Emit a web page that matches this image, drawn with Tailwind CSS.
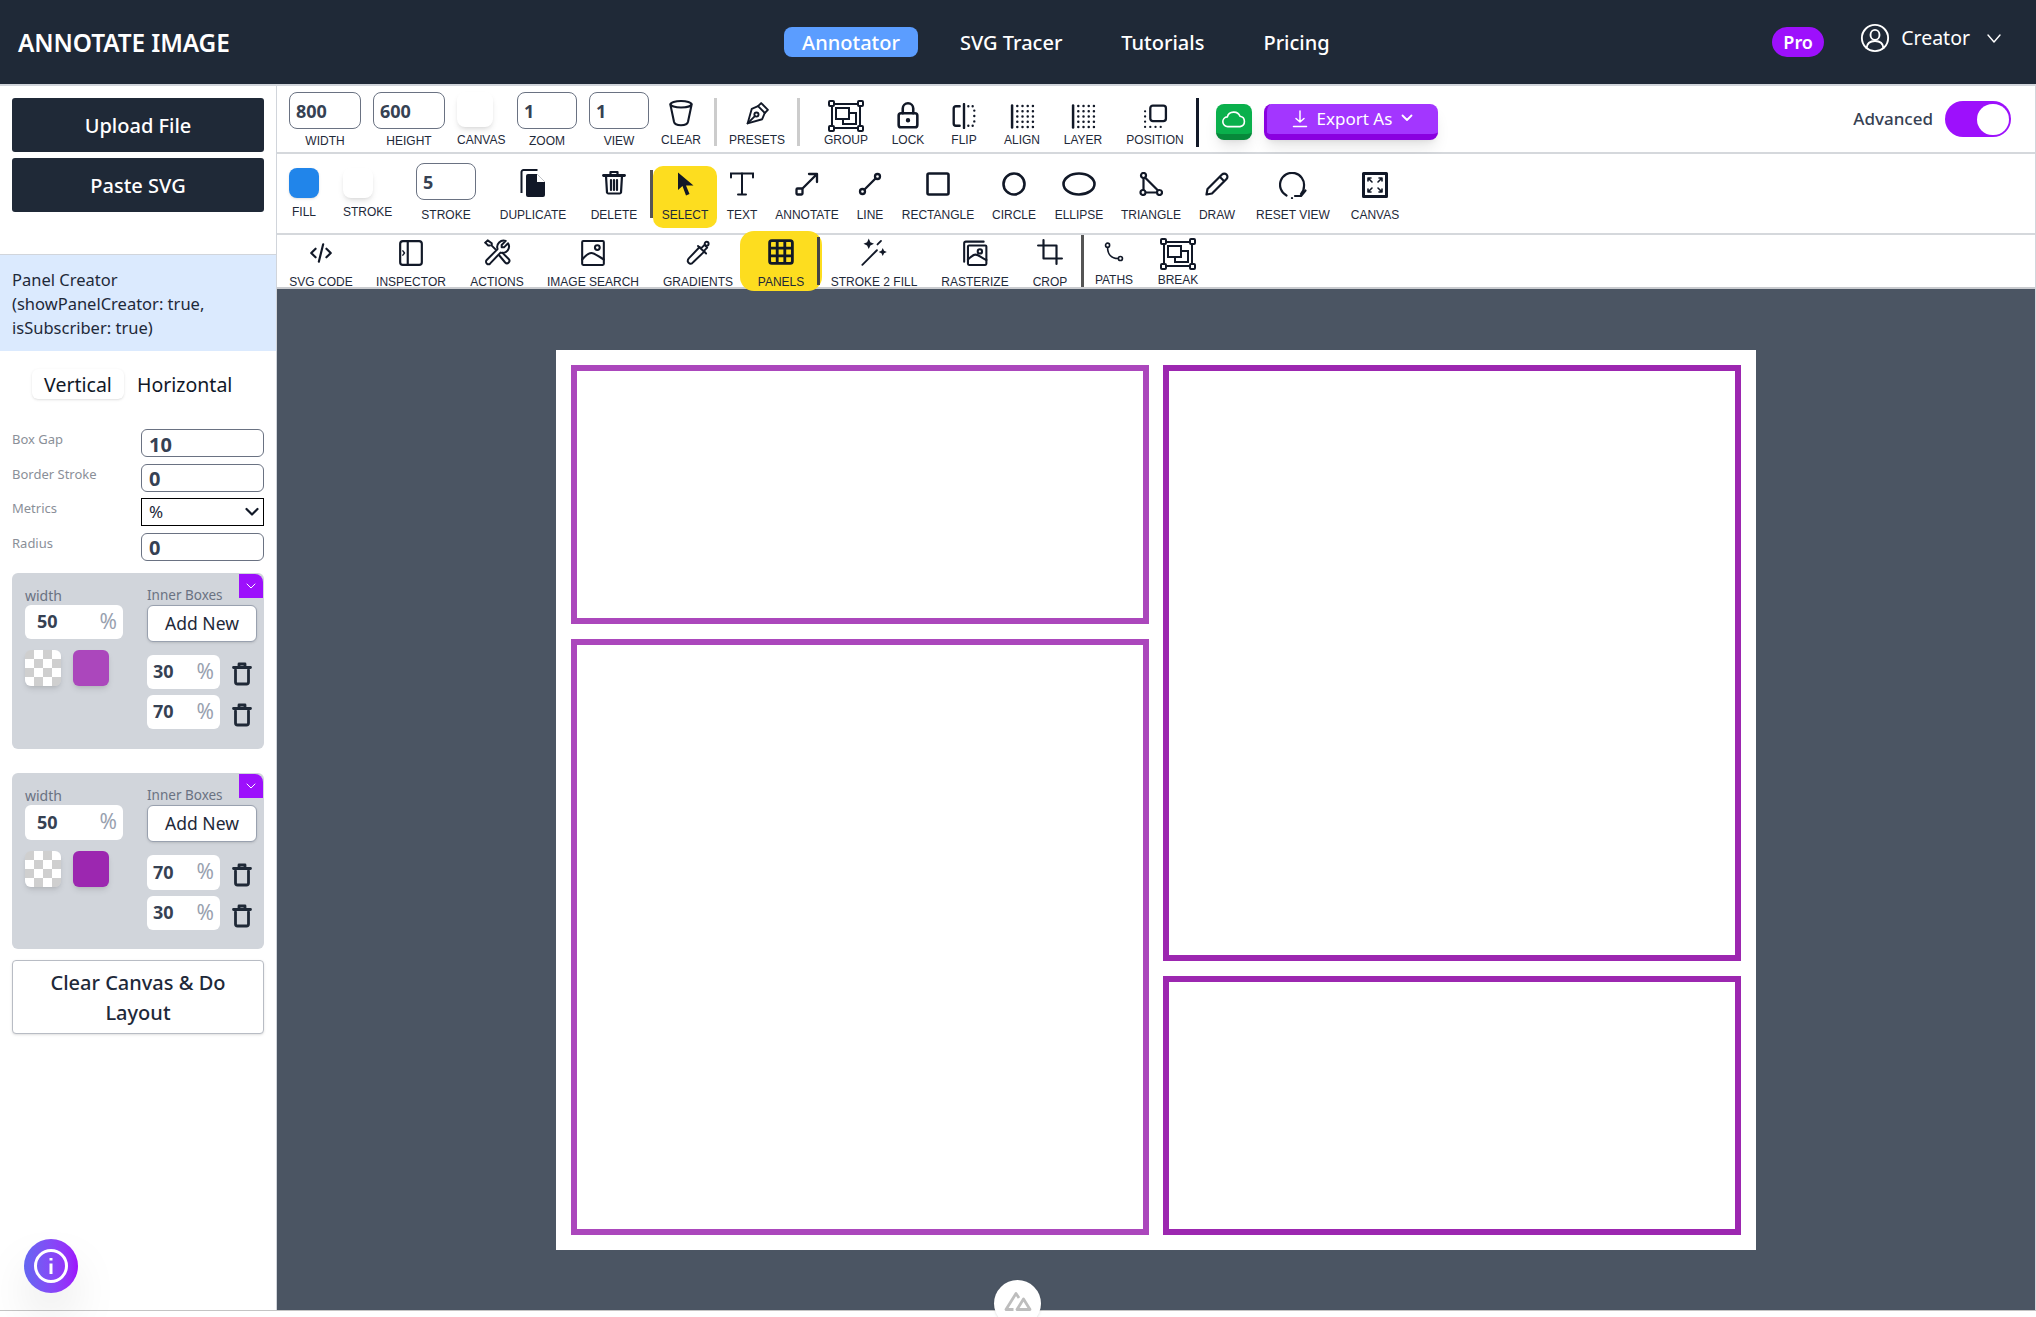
<!DOCTYPE html>
<html lang="en">
<head>
  <meta charset="UTF-8">
  <meta name="viewport" content="width=device-width, initial-scale=1.0">
  <title>Annotate Image</title>
  <script src="https://cdn.jsdelivr.net/npm/@tailwindcss/browser@4"></script>
</head>
<body class="bg-white font-['Noto_Sans',sans-serif] text-gray-800 overflow-hidden">
<div class="relative w-[2036px] h-[1317px] flex flex-col overflow-hidden">

  <!-- Header -->
  <header class="h-[86px] shrink-0 bg-[#1f2937] border-b-2 border-[#d1d5db] flex items-center pl-[18px] pr-[34px] text-white">
    <div class="pt-[2px] text-[24.4px] font-semibold tracking-[-0.1px] whitespace-nowrap w-[230px]">ANNOTATE IMAGE</div>
    <nav class="ml-[536px] flex items-center gap-[23px] text-[20px] font-medium">
      <a class="mr-[1px] h-[30px] w-[134px] pt-[1px] flex items-center justify-center rounded-lg bg-[#5b9dff]">Annotator</a>
      <a class="px-[18px] pt-[1px]">SVG Tracer</a>
      <a class="px-[18px] pt-[1px]">Tutorials</a>
      <a class="px-[18px] pt-[1px]">Pricing</a>
    </nav>
    <div class="ml-auto flex items-center">
      <span class="w-[52px] h-[30px] rounded-full bg-[#9d10fc] flex items-center justify-center text-[18px] font-semibold">Pro</span>
      <div class="ml-[36px] -mt-[8px] flex items-center">
        <svg class="w-[30px] h-[30px]" viewBox="0 0 24 24" fill="none" stroke="currentColor" stroke-width="1.5" stroke-linecap="round"><circle cx="12" cy="12" r="10.5"/><ellipse cx="12" cy="9.5" rx="3.6" ry="4"/><path d="M5.2 20c.4-3.6 3.2-5.6 6.8-5.6s6.4 2 6.8 5.6"/></svg>
        <span class="ml-[11px] text-[19.5px]">Creator</span>
        <svg class="ml-[16px] w-[16px] h-[16px]" viewBox="0 0 16 16" fill="none" stroke="currentColor" stroke-width="1.4" stroke-linecap="round" stroke-linejoin="round"><path d="M2 5l6 7 6-7"/></svg>
      </div>
    </div>
  </header>

  <div class="flex h-[1224px] shrink-0">

    <!-- Sidebar -->
    <aside class="w-[277px] shrink-0 border-r border-[#d1d5db] bg-white relative flex flex-col">
      <div class="px-[12px] pt-[12px] flex flex-col gap-[6px]">
        <button class="h-[54px] pt-[2px] rounded-[3px] bg-[#1f2937] text-white text-[20px] font-medium">Upload File</button>
        <button class="h-[54px] pt-[2px] rounded-[3px] bg-[#1f2937] text-white text-[20px] font-medium">Paste SVG</button>
      </div>

      <div class="mt-[42px] h-[97px] border-t border-[#d1d5db] bg-[#dbeafe] pl-[12px] pt-[13px] text-[16.5px] leading-[24px] text-gray-800">
        Panel Creator<br>(showPanelCreator: true,<br>isSubscriber: true)
      </div>

      <div class="mt-[18px] h-[30px] pl-[32px] flex items-center text-[19.5px] leading-[26px] text-gray-900">
        <span class="w-[92px] h-[30px] pt-[2px] rounded-md bg-white shadow flex items-center justify-center">Vertical</span>
        <span class="ml-[13px] pt-[2px]">Horizontal</span>
      </div>

      <div class="mt-[30px] px-[12px] flex flex-col gap-[6.5px]">
        <div class="flex items-start justify-between h-[28px] text-[13px] leading-[20px] text-[#8a8f98]">
          <span>Box Gap</span>
          <input value="10" class="w-[123px] h-[28px] border border-gray-500 rounded-md pl-[7px] pt-[2px] text-[20px] font-bold text-gray-700">
        </div>
        <div class="flex items-start justify-between h-[28px] text-[13px] leading-[20px] text-[#8a8f98]">
          <span>Border Stroke</span>
          <input value="0" class="w-[123px] h-[28px] border border-gray-500 rounded-md pl-[7px] pt-[2px] text-[20px] font-bold text-gray-700">
        </div>
        <div class="flex items-start justify-between h-[28px] text-[13px] leading-[20px] text-[#8a8f98]">
          <span>Metrics</span>
          <div class="relative w-[123px] h-[28px]">
            <select class="appearance-none w-full h-full border border-black bg-white pl-[7px] text-[17px] text-gray-800"><option>%</option></select>
            <svg class="absolute right-[5px] top-[9px] w-[14px] h-[10px] pointer-events-none" viewBox="0 0 14 10" fill="none" stroke="#111827" stroke-width="2.2" stroke-linecap="round" stroke-linejoin="round"><path d="M1.5 2L7 7.5 12.5 2"/></svg>
          </div>
        </div>
        <div class="flex items-start justify-between h-[28px] text-[13px] leading-[20px] text-[#8a8f98]">
          <span>Radius</span>
          <input value="0" class="w-[123px] h-[28px] border border-gray-500 rounded-md pl-[7px] pt-[2px] text-[20px] font-bold text-gray-700">
        </div>
      </div>

      <!-- Box 1 -->
      <div class="relative mx-[12px] mt-[12px] h-[176px] rounded-md bg-[#d1d5db] pl-[13px] pt-[13px] flex">
        <div class="absolute right-[1px] top-[1px] w-[24px] h-[24px] bg-[#9d10fc] rounded-tr-lg flex items-center justify-center">
          <svg class="w-[10px] h-[10px]" viewBox="0 0 10 10" fill="none" stroke="white" stroke-width="1" stroke-linecap="round"><path d="M1 3l4 4 4-4"/></svg>
        </div>
        <div class="w-[122px]">
          <div class="h-[19px] text-[14px] leading-[19px] text-gray-500">width</div>
          <div class="w-[98px] h-[34px] rounded-md bg-white flex items-center pl-[12px] pr-[6px]">
            <span class="text-[18px] font-bold text-gray-700">50</span>
            <span class="ml-auto text-[21px] text-gray-400">%</span>
          </div>
          <div class="mt-[11px] flex gap-[12px]">
            <div class="w-[36px] h-[36px] rounded-md shadow-md bg-[image:repeating-conic-gradient(#cfcfcf_0_25%,#fff_0_50%)] bg-[length:18px_18px] bg-[position:9px_0]"></div>
            <div class="w-[36px] h-[36px] rounded-md shadow-md bg-[#ab47bc]"></div>
          </div>
        </div>
        <div class="w-[110px]">
          <div class="h-[19px] text-[13.5px] leading-[19px] text-gray-500 whitespace-nowrap">Inner Boxes</div>
          <button class="w-[110px] h-[37px] rounded-md bg-white border border-gray-400 shadow text-[17.5px] text-gray-800">Add New</button>
          <div class="mt-[13px] flex items-center">
            <div class="w-[73px] h-[34px] rounded-md bg-white flex items-center pl-[6px] pr-[6px]">
              <span class="text-[18px] font-bold text-gray-700">30</span>
              <span class="ml-auto text-[21px] text-gray-400">%</span>
            </div>
            <svg class="ml-[12px] mt-[5px] w-[20px] h-[24px]" viewBox="0 0 20 24" fill="none" stroke="#1f2937" stroke-width="2.8" stroke-linecap="round" stroke-linejoin="round"><path d="M1.5 5.5h17M7 5.5V2h6v3.5M3.5 8v12a2 2 0 0 0 2 2h9a2 2 0 0 0 2-2V8"/></svg>
          </div>
          <div class="mt-[6px] flex items-center">
            <div class="w-[73px] h-[34px] rounded-md bg-white flex items-center pl-[6px] pr-[6px]">
              <span class="text-[18px] font-bold text-gray-700">70</span>
              <span class="ml-auto text-[21px] text-gray-400">%</span>
            </div>
            <svg class="ml-[12px] mt-[7px] w-[20px] h-[24px]" viewBox="0 0 20 24" fill="none" stroke="#1f2937" stroke-width="2.8" stroke-linecap="round" stroke-linejoin="round"><path d="M1.5 5.5h17M7 5.5V2h6v3.5M3.5 8v12a2 2 0 0 0 2 2h9a2 2 0 0 0 2-2V8"/></svg>
          </div>
        </div>
      </div>

      <!-- Box 2 -->
      <div class="relative mx-[12px] mt-[24px] h-[176px] rounded-md bg-[#d1d5db] pl-[13px] pt-[13px] flex">
        <div class="absolute right-[1px] top-[1px] w-[24px] h-[24px] bg-[#9d10fc] rounded-tr-lg flex items-center justify-center">
          <svg class="w-[10px] h-[10px]" viewBox="0 0 10 10" fill="none" stroke="white" stroke-width="1" stroke-linecap="round"><path d="M1 3l4 4 4-4"/></svg>
        </div>
        <div class="w-[122px]">
          <div class="h-[19px] text-[14px] leading-[19px] text-gray-500">width</div>
          <div class="w-[98px] h-[35px] rounded-md bg-white flex items-center pl-[12px] pr-[6px]">
            <span class="text-[18px] font-bold text-gray-700">50</span>
            <span class="ml-auto text-[21px] text-gray-400">%</span>
          </div>
          <div class="mt-[11px] flex gap-[12px]">
            <div class="w-[36px] h-[36px] rounded-md shadow-md bg-[image:repeating-conic-gradient(#cfcfcf_0_25%,#fff_0_50%)] bg-[length:18px_18px] bg-[position:9px_0]"></div>
            <div class="w-[36px] h-[36px] rounded-md shadow-md bg-[#9c27b0]"></div>
          </div>
        </div>
        <div class="w-[110px]">
          <div class="h-[19px] text-[13.5px] leading-[19px] text-gray-500 whitespace-nowrap">Inner Boxes</div>
          <button class="w-[110px] h-[37px] rounded-md bg-white border border-gray-400 shadow text-[17.5px] text-gray-800">Add New</button>
          <div class="mt-[13px] flex items-center">
            <div class="w-[73px] h-[35px] rounded-md bg-white flex items-center pl-[6px] pr-[6px]">
              <span class="text-[18px] font-bold text-gray-700">70</span>
              <span class="ml-auto text-[21px] text-gray-400">%</span>
            </div>
            <svg class="ml-[12px] mt-[5px] w-[20px] h-[24px]" viewBox="0 0 20 24" fill="none" stroke="#1f2937" stroke-width="2.8" stroke-linecap="round" stroke-linejoin="round"><path d="M1.5 5.5h17M7 5.5V2h6v3.5M3.5 8v12a2 2 0 0 0 2 2h9a2 2 0 0 0 2-2V8"/></svg>
          </div>
          <div class="mt-[6px] flex items-center">
            <div class="w-[73px] h-[34px] rounded-md bg-white flex items-center pl-[6px] pr-[6px]">
              <span class="text-[18px] font-bold text-gray-700">30</span>
              <span class="ml-auto text-[21px] text-gray-400">%</span>
            </div>
            <svg class="ml-[12px] mt-[7px] w-[20px] h-[24px]" viewBox="0 0 20 24" fill="none" stroke="#1f2937" stroke-width="2.8" stroke-linecap="round" stroke-linejoin="round"><path d="M1.5 5.5h17M7 5.5V2h6v3.5M3.5 8v12a2 2 0 0 0 2 2h9a2 2 0 0 0 2-2V8"/></svg>
          </div>
        </div>
      </div>

      <button class="mx-[12px] mt-[11px] h-[74px] pt-[2px] rounded-[4px] bg-white border border-[#b8bcc4] shadow text-[20px] leading-[30px] font-medium text-gray-800">Clear Canvas &amp; Do<br>Layout</button>

      <!-- Help bubble -->
      <button class="absolute left-[24px] top-[1153px] w-[54px] h-[54px] rounded-full bg-gradient-to-r from-[#6366f1] to-[#9d10fc] shadow-2xl flex items-center justify-center">
        <svg class="w-[36px] h-[36px]" viewBox="0 0 36 36" fill="none" stroke="white" stroke-width="3"><circle cx="18" cy="18" r="15.5"/><path d="M18 15.5V26"/><path d="M18 10v2.5"/></svg>
      </button>
    </aside>

    <div class="flex-1 min-w-0 flex flex-col border-r border-[#d1d5db] font-['Liberation_Sans',sans-serif]">

      <!-- Toolbar row 1 -->
      <div class="h-[68px] shrink-0 border-b-2 border-[#d5d8dc] bg-white flex items-start pl-[12px] pt-[6px] pr-[24px] text-[12px] leading-4 text-gray-800">
        <div class="w-[72px] h-[57px] flex flex-col items-center justify-between">
          <input value="800" class="w-[72px] h-[37px] border border-gray-500 rounded-lg pl-[6px] text-[18px] font-bold text-gray-700 font-['Noto_Sans',sans-serif]">
          <span>WIDTH</span>
        </div>
        <div class="ml-[12px] w-[72px] h-[57px] flex flex-col items-center justify-between">
          <input value="600" class="w-[72px] h-[37px] border border-gray-500 rounded-lg pl-[6px] text-[18px] font-bold text-gray-700 font-['Noto_Sans',sans-serif]">
          <span>HEIGHT</span>
        </div>
        <div class="ml-[12px] w-[36px] h-[56px] flex flex-col items-start justify-between">
          <div class="w-[36px] h-[35px] rounded-lg bg-white shadow-md"></div>
          <span>CANVAS</span>
        </div>
        <div class="ml-[24px] w-[60px] h-[57px] flex flex-col items-center justify-between">
          <input value="1" class="w-[60px] h-[37px] border border-gray-500 rounded-lg pl-[6px] text-[18px] font-bold text-gray-700 font-['Noto_Sans',sans-serif]">
          <span>ZOOM</span>
        </div>
        <div class="ml-[12px] w-[60px] h-[57px] flex flex-col items-center justify-between">
          <input value="1" class="w-[60px] h-[37px] border border-gray-500 rounded-lg pl-[6px] text-[18px] font-bold text-gray-700 font-['Noto_Sans',sans-serif]">
          <span>VIEW</span>
        </div>
        <div class="ml-[12px] w-[40px] h-[56px] flex flex-col items-center justify-between">
          <svg class="mt-[7px] w-[28px] h-[28px]" viewBox="0 0 24 24" fill="none" stroke="#111827" stroke-width="1.8" stroke-linecap="round" stroke-linejoin="round"><ellipse cx="12" cy="4.5" rx="9" ry="2.8"/><path d="M3 4.5c0 1 .1 1.8.4 2.7L6 19.5C6.500 21.500 9 22.500 12 22.500s5.500-1 6-3L20.600 7.200c.3-.9.400-1.700.400-2.700"/></svg>
          <span>CLEAR</span>
        </div>
        <div class="ml-[13px] mt-[6px] w-[3px] h-[48px] bg-[#cccccc]"></div>
        <div class="ml-[10px] w-[60px] h-[56px] flex flex-col items-center justify-between">
          <svg class="mt-[9px] w-[25px] h-[25px]" viewBox="0 0 24 24" fill="none" stroke="#111827" stroke-width="1.8" stroke-linecap="round" stroke-linejoin="round"><path d="M15.5 2l6.500 6.500-3 3L12.500 5z"/><path d="M12.500 5L6.500 7.500 2.500 21.500l14-4 2.500-6"/><path d="M2.500 21.500l6.500-6.500"/><circle cx="11" cy="13" r="2"/></svg>
          <span>PRESETS</span>
        </div>
        <div class="ml-[10px] mt-[6px] w-[3px] h-[48px] bg-[#cccccc]"></div>
        <div class="ml-[26px] w-[40px] h-[56px] flex flex-col items-center justify-between">
          <svg class="mt-[8px] w-[36px] h-[32px]" viewBox="0 0 36 32" fill="none" stroke="#111827" stroke-width="2"><path d="M4 5v22M32 5v22M5 4h26M5 28h26"/><rect x="1" y="1" width="5" height="5" rx="1"/><rect x="30" y="1" width="5" height="5" rx="1"/><rect x="1" y="26" width="5" height="5" rx="1"/><rect x="30" y="26" width="5" height="5" rx="1"/><rect x="8" y="8" width="13" height="11"/><path d="M21 13h7v11H15v-5"/></svg>
          <span>GROUP</span>
        </div>
        <div class="ml-[22px] w-[40px] h-[56px] flex flex-col items-center justify-between">
          <svg class="mt-[9px] w-[28px] h-[28px]" viewBox="0 0 24 24" fill="none" stroke="#111827" stroke-width="2.2" stroke-linecap="round" stroke-linejoin="round"><rect x="4" y="10.500" width="16" height="12" rx="2"/><path d="M7.500 10.500V6.500a4.500 4.500 0 0 1 9 0v4"/><circle cx="12" cy="16.500" r=".8" fill="#111827"/></svg>
          <span>LOCK</span>
        </div>
        <div class="ml-[21px] w-[30px] h-[56px] flex flex-col items-center justify-between">
          <svg class="mt-[11px] w-[26px] h-[26px]" viewBox="0 0 24 24" fill="none" stroke="#111827" stroke-width="2.2" stroke-linecap="round" stroke-linejoin="round"><path d="M12 1v22"/><path d="M8 3H4.500a2 2 0 0 0-2 2v14a2 2 0 0 0 2 2H8"/><path d="M16 3h.01M20 3h.01M21.500 7h.01M21.500 12h.01M21.500 17h.01M20 21h.01M16 21h.01"/></svg>
          <span>FLIP</span>
        </div>
        <div class="ml-[23px] w-[40px] h-[56px] flex flex-col items-center justify-between">
          <svg class="mt-[12px] w-[25px] h-[25px]" viewBox="0 0 24 24" fill="none" stroke="#111827" stroke-width="2.4" stroke-linecap="round"><path d="M2 1.500v21"/><path d="M7 2h.01M12 2h.01M17 2h.01M22 2h.01M7 7h.01M12 7h.01M17 7h.01M22 7h.01M7 12h.01M12 12h.01M17 12h.01M22 12h.01M7 17h.01M12 17h.01M17 17h.01M22 17h.01M7 22h.01M12 22h.01M17 22h.01M22 22h.01"/></svg>
          <span>ALIGN</span>
        </div>
        <div class="ml-[21px] w-[40px] h-[56px] flex flex-col items-center justify-between">
          <svg class="mt-[12px] w-[25px] h-[25px]" viewBox="0 0 24 24" fill="none" stroke="#111827" stroke-width="2.4" stroke-linecap="round"><path d="M2 1.500v21"/><path d="M7 2h.01M12 2h.01M17 2h.01M22 2h.01M7 7h.01M12 7h.01M17 7h.01M22 7h.01M7 12h.01M12 12h.01M17 12h.01M22 12h.01M7 17h.01M12 17h.01M17 17h.01M22 17h.01M7 22h.01M12 22h.01M17 22h.01M22 22h.01"/></svg>
          <span>LAYER</span>
        </div>
        <div class="ml-[22px] w-[60px] h-[56px] flex flex-col items-center justify-between">
          <svg class="mt-[12px] w-[25px] h-[25px]" viewBox="0 0 24 24" fill="none" stroke="#111827" stroke-width="2.2" stroke-linecap="round" stroke-linejoin="round"><rect x="7" y="1.500" width="15" height="15" rx="2.500"/><path d="M2 7h.01M2 12h.01M2 17h.01M2 22h.01M7 22h.01M12 22h.01M17 22h.01"/></svg>
          <span>POSITION</span>
        </div>
        <div class="ml-[11px] mt-[6px] w-[3px] h-[49px] bg-[#111827]"></div>
        <button class="ml-[17px] mt-[12px] w-[36px] h-[36px] rounded-lg bg-[#0ab04c] border-b-[6px] border-[#07893a] shadow-lg flex items-center justify-center">
          <svg class="w-[26px] h-[26px]" viewBox="0 0 24 24" fill="none" stroke="white" stroke-width="1.5" stroke-linejoin="round"><path d="M6.500 19a4.500 4.500 0 0 1-.6-9A6 5.500 0 0 1 17.500 9.500 4.800 4.800 0 0 1 17.500 19z"/></svg>
        </button>
        <button class="ml-[12px] mt-[12px] w-[174px] h-[36px] rounded-lg bg-[#a336ff] border-b-[6px] border-l-[3px] border-[#8a00e0] shadow-lg flex items-center justify-center text-white font-['Noto_Sans',sans-serif] text-[17px]">
          <svg class="w-[16px] h-[18px]" viewBox="0 0 16 18" fill="none" stroke="white" stroke-width="1.5" stroke-linecap="round" stroke-linejoin="round"><path d="M8 1v11M4 8.500L8 12l4-3.500M1.500 16.500h13"/></svg>
          <span class="ml-[9px]">Export As</span>
          <svg class="ml-[9px] mb-[3px] w-[12px] h-[12px]" viewBox="0 0 12 12" fill="none" stroke="white" stroke-width="1.8" stroke-linecap="round" stroke-linejoin="round"><path d="M1.500 3.500L6 8l4.500-4.500"/></svg>
        </button>
        <div class="ml-auto mt-[9px] flex items-center font-['Noto_Sans',sans-serif]">
          <span class="text-[17px] font-medium leading-[36px] text-gray-700">Advanced</span>
          <div class="ml-[12px] w-[66px] h-[36px] rounded-full bg-[#9d10fc] flex items-center justify-end pr-[2px]">
            <div class="w-[32px] h-[31px] rounded-full bg-white"></div>
          </div>
        </div>
      </div>

      <!-- Toolbar row 2 -->
      <div class="h-[81px] shrink-0 border-b-2 border-[#d5d8dc] bg-white flex items-start pl-[12px] pt-[9px] text-[12px] leading-4 text-gray-800">
        <div class="w-[30px] h-[57px] flex flex-col items-center justify-between">
          <div class="mt-[5px] w-[30px] h-[30px] rounded-lg bg-[#2185ea] shadow-sm"></div>
          <span>FILL</span>
        </div>
        <div class="ml-[24px] w-[48px] h-[57px] flex flex-col items-start justify-between">
          <div class="mt-[5px] w-[30px] h-[30px] rounded-lg bg-white shadow-md"></div>
          <span>STROKE</span>
        </div>
        <div class="ml-[25px] w-[60px] h-[60px] flex flex-col items-center justify-between">
          <input value="5" class="w-[60px] h-[37px] border border-gray-500 rounded-lg pl-[6px] text-[18px] font-bold text-gray-700 font-['Noto_Sans',sans-serif]">
          <span>STROKE</span>
        </div>
        <div class="ml-[22px] w-[70px] h-[60px] flex flex-col items-center justify-between">
          <svg class="mt-[5px] w-[26px] h-[29px]" viewBox="0 0 26 29" fill="none" stroke="#111827" stroke-width="2"><path d="M1.500 25V4a2 2 0 0 1 2-2h14"/><path d="M8 6h9l8 8v13a2 2 0 0 1-2 2H8a2 2 0 0 1-2-2V8a2 2 0 0 1 2-2z" fill="#111827" stroke="none"/><path d="M17 6v8h8z" fill="white" stroke="none"/></svg>
          <span>DUPLICATE</span>
        </div>
        <div class="ml-[21px] w-[50px] h-[60px] flex flex-col items-center justify-between">
          <svg class="mt-[7px] w-[24px] h-[25px]" viewBox="0 0 24 25" fill="none" stroke="#111827" stroke-width="2.2" stroke-linecap="round" stroke-linejoin="round"><path d="M1.500 5.500h21" stroke-width="2.800"/><path d="M8.500 5V2h7v3"/><path d="M4 6l1 16.500a1.500 1.500 0 0 0 1.500 1h11a1.500 1.500 0 0 0 1.500-1L20 6"/><path d="M9 10v10M12 10v10M15 10v10"/></svg>
          <span>DELETE</span>
        </div>
        <div class="ml-[11px] mt-[7px] w-[3px] h-[48px] bg-[#555555]"></div>
        <div class="mt-[3px] w-[64px] h-[62px] pb-[5px] rounded-[10px] bg-[#fddd1f] flex flex-col items-center justify-between">
          <svg class="mt-[6px] w-[17px] h-[24px]" viewBox="0 0 17 24" fill="#111827"><path d="M1 0.500V18l4.500-4 3.500 9.500 3.500-1.500-3.500-8.500H16.500z"/></svg>
          <span>SELECT</span>
        </div>
        <div class="ml-[5px] w-[40px] h-[60px] flex flex-col items-center justify-between">
          <svg class="mt-[9px] w-[24px] h-[24px]" viewBox="0 0 24 24" fill="none" stroke="#111827" stroke-width="2" stroke-linecap="round"><path d="M1 5.500V1.500h22v4"/><path d="M12 1.500V22.500M8 22.500h8"/></svg>
          <span>TEXT</span>
        </div>
        <div class="ml-[11px] w-[68px] h-[60px] flex flex-col items-center justify-between">
          <svg class="mt-[9px] w-[24px] h-[24px]" viewBox="0 0 24 24" fill="none" stroke="#111827" stroke-width="2.3" stroke-linecap="round" stroke-linejoin="round"><rect x="1.500" y="16.500" width="6" height="6" rx="1"/><path d="M7.500 16.500L22 2M14 2h8v8"/></svg>
          <span>ANNOTATE</span>
        </div>
        <div class="ml-[14px] w-[30px] h-[60px] flex flex-col items-center justify-between">
          <svg class="mt-[9px] w-[24px] h-[24px]" viewBox="0 0 24 24" fill="none" stroke="#111827" stroke-width="2.3" stroke-linecap="round"><circle cx="4.500" cy="19.500" r="2.500"/><circle cx="19.500" cy="4.500" r="2.500"/><path d="M6.500 17.500L17.500 6.500"/></svg>
          <span>LINE</span>
        </div>
        <div class="ml-[15px] w-[76px] h-[60px] flex flex-col items-center justify-between">
          <svg class="mt-[9px] w-[24px] h-[24px]" viewBox="0 0 24 24" fill="none" stroke="#111827" stroke-width="2.6"><rect x="1.500" y="1.500" width="21" height="21" rx="1.500"/></svg>
          <span>RECTANGLE</span>
        </div>
        <div class="ml-[15px] w-[46px] h-[60px] flex flex-col items-center justify-between">
          <svg class="mt-[9px] w-[24px] h-[24px]" viewBox="0 0 24 24" fill="none" stroke="#111827" stroke-width="2.6"><circle cx="12" cy="12" r="10.500"/></svg>
          <span>CIRCLE</span>
        </div>
        <div class="ml-[17px] w-[50px] h-[60px] flex flex-col items-center justify-between">
          <svg class="mt-[9px] w-[34px] h-[24px]" viewBox="0 0 34 24" fill="none" stroke="#111827" stroke-width="2.6"><ellipse cx="17" cy="12" rx="15.500" ry="10.500"/></svg>
          <span>ELLIPSE</span>
        </div>
        <div class="ml-[16px] w-[62px] h-[60px] flex flex-col items-center justify-between">
          <svg class="mt-[9px] w-[24px] h-[24px]" viewBox="0 0 24 24" fill="none" stroke="#111827" stroke-width="2.2"><circle cx="4.500" cy="3.500" r="2.500"/><circle cx="4" cy="20.500" r="2.500"/><circle cx="20.500" cy="20.500" r="2.500"/><path d="M4.500 6v12M6.500 20.500h11.500M6 5.500l13 13"/></svg>
          <span>TRIANGLE</span>
        </div>
        <div class="ml-[16px] w-[38px] h-[60px] flex flex-col items-center justify-between">
          <svg class="mt-[9px] w-[24px] h-[24px]" viewBox="0 0 24 24" fill="none" stroke="#111827" stroke-width="2.2" stroke-linecap="round" stroke-linejoin="round"><path d="M1.500 22.500l1-5.500L17 2.500a3 3 0 0 1 4.500 4.500L7 21.500z"/><path d="M15 5l4 4"/></svg>
          <span>DRAW</span>
        </div>
        <div class="ml-[19px] w-[76px] h-[60px] flex flex-col items-center justify-between">
          <svg class="mt-[9px] w-[28px] h-[27px]" viewBox="0 0 28 27" fill="none" stroke="#111827" stroke-width="2.2" stroke-linecap="round" stroke-linejoin="round"><path d="M7.500 23.500A12 12 0 1 1 25 14c0 3.500-1 6-3 8"/><path d="M26.500 18.500L22 24h-6"/><path d="M13 26h.01"/></svg>
          <span>RESET VIEW</span>
        </div>
        <div class="ml-[19px] w-[50px] h-[60px] flex flex-col items-center justify-between">
          <svg class="mt-[9px] w-[26px] h-[26px]" viewBox="0 0 26 26" fill="none" stroke="#111827" stroke-width="1.6" stroke-linecap="round" stroke-linejoin="round"><rect x="1.500" y="1.500" width="23" height="23" stroke-width="3"/><path d="M10 10L6 6M6 9V6h3M16 10l4-4M17 6h3v3M10 16l-4 4M6 17v3h3M16 16l4 4M20 17v3h-3"/></svg>
          <span>CANVAS</span>
        </div>
      </div>

      <!-- Toolbar row 3 -->
      <div class="relative z-20 h-[54px] shrink-0 border-b-2 border-[#c9cbcf] bg-white flex items-start pl-[12px] text-[12px] leading-4 text-gray-800">
        <div class="w-[64px] h-[55px] flex flex-col items-center justify-between">
          <svg class="mt-[5px] w-[26px] h-[26px]" viewBox="0 0 24 24" fill="none" stroke="#111827" stroke-width="2" stroke-linecap="round" stroke-linejoin="round"><path d="M7 8l-4 4 4 4M17 8l4 4-4 4M14 4l-4 16"/></svg>
          <span>SVG CODE</span>
        </div>
        <div class="ml-[23px] w-[70px] h-[55px] flex flex-col items-center justify-between">
          <svg class="mt-[5px] w-[26px] h-[26px]" viewBox="0 0 24 24" fill="none" stroke="#111827" stroke-width="2" stroke-linecap="round" stroke-linejoin="round"><rect x="2" y="1" width="20" height="22" rx="2.500"/><path d="M9 1v22"/><path d="M4.500 10l1.500 2-1.500 2" stroke-width="1.300"/></svg>
          <span>INSPECTOR</span>
        </div>
        <div class="ml-[24px] w-[54px] h-[55px] flex flex-col items-center justify-between">
          <svg class="mt-[3px] w-[28px] h-[28px]" viewBox="0 0 24 24" fill="none" stroke="#111827" stroke-width="1.7" stroke-linecap="round" stroke-linejoin="round"><path d="M21.500 4.500L18 8h-2V6l3.500-3.500a5.500 5.500 0 0 0-7 7L3.200 18.800a2 2 0 0 0 3 3L15 12.500a5.500 5.500 0 0 0 6.500-8z"/><path d="M2 4l2-2 3.500 2.500v2l3 3"/><path d="M6 6.500H4.500L2 4"/><path d="M14 15l5 6a2 2 0 0 0 3-3l-5.500-5.500"/></svg>
          <span>ACTIONS</span>
        </div>
        <div class="ml-[23px] w-[92px] h-[55px] flex flex-col items-center justify-between">
          <svg class="mt-[5px] w-[26px] h-[26px]" viewBox="0 0 24 24" fill="none" stroke="#111827" stroke-width="1.9" stroke-linecap="round" stroke-linejoin="round"><rect x="2" y="1" width="20" height="22" rx="1"/><circle cx="16" cy="7" r="2.200"/><path d="M2 18c3-3.500 6-6 8.500-6 3 0 6 3 11.500 6"/></svg>
          <span>IMAGE SEARCH</span>
        </div>
        <div class="ml-[23px] w-[72px] h-[55px] flex flex-col items-center justify-between">
          <svg class="mt-[5px] w-[26px] h-[26px]" viewBox="0 0 24 24" fill="none" stroke="#111827" stroke-width="1.8" stroke-linecap="round" stroke-linejoin="round"><path d="M13.500 6.500L3.500 17c-2 2.500-.5 4 .5 4.500 1 .5 2.500 .5 3.500-1L18 10.500"/><path d="M12 5.500l7.500 7M15 7.500l3-3 2.500 2.500-3 3"/><circle cx="20" cy="3.500" r="1.800"/></svg>
          <span>GRADIENTS</span>
        </div>
        <div class="relative ml-[6px] -mt-[4px] w-[82px] h-[60px] pb-[1px] rounded-[14px] bg-[#fddd1f] flex flex-col items-center justify-between">
          <svg class="mt-[8px] w-[26px] h-[26px]" viewBox="0 0 24 24" fill="none" stroke="#111827" stroke-width="2.6"><rect x="1.500" y="1.500" width="21" height="21" rx="2"/><path d="M8.500 1.500v21M15.500 1.500v21M1.500 8.500h21M1.500 15.500h21"/></svg>
          <span>PANELS</span>
          <div class="absolute left-[77px] top-[6px] w-[3px] h-[48px] bg-[#444444]"></div>
        </div>
        <div class="ml-[8px] w-[88px] h-[55px] flex flex-col items-center justify-between">
          <svg class="mt-[3px] w-[28px] h-[28px]" viewBox="0 0 24 24" fill="none" stroke="#111827" stroke-width="1.6" stroke-linecap="round"><path d="M2 23l12.500-12.500"/><path d="M15 5.500l3-3"/><path d="M7.500 0.500l1.400 3.100 3.100 1.400-3.100 1.400-1.400 3.100-1.400-3.100L3 5l3.100-1.400z" fill="#111827" stroke="none"/><path d="M19.500 8.500l1.100 2.400 2.400 1.100-2.400 1.100-1.100 2.400-1.100-2.400-2.400-1.100 2.400-1.100z" fill="#111827" stroke="none"/></svg>
          <span>STROKE 2 FILL</span>
        </div>
        <div class="ml-[23px] w-[68px] h-[55px] flex flex-col items-center justify-between">
          <svg class="mt-[5px] w-[26px] h-[26px]" viewBox="0 0 24 24" fill="none" stroke="#111827" stroke-width="1.9" stroke-linecap="round" stroke-linejoin="round"><path d="M2 20V3a1.500 1.500 0 0 1 1.500-1.500H20"/><rect x="5.500" y="5" width="17" height="18" rx="1"/><circle cx="16.500" cy="10.500" r="2"/><path d="M5.500 18c3-3 5-4.500 7-4.500 2.500 0 5 2.500 10 5"/></svg>
          <span>RASTERIZE</span>
        </div>
        <div class="ml-[23px] w-[36px] h-[55px] flex flex-col items-center justify-between">
          <svg class="mt-[4px] w-[26px] h-[26px]" viewBox="0 0 24 24" fill="none" stroke="#111827" stroke-width="2" stroke-linecap="round" stroke-linejoin="round"><path d="M6 1v17h17"/><path d="M1 6h17v17"/></svg>
          <span>CROP</span>
        </div>
        <div class="ml-[13px] w-[3px] h-[52px] bg-[#555555]"></div>
        <div class="ml-[10px] w-[40px] h-[53px] flex flex-col items-center justify-between">
          <svg class="mt-[7px] w-[22px] h-[22px]" viewBox="0 0 24 24" fill="none" stroke="#111827" stroke-width="1.8" stroke-linecap="round"><circle cx="5" cy="3.500" r="2.200"/><circle cx="19" cy="18" r="2.200"/><path d="M5 6c0 7 4 12 11.500 12"/></svg>
          <span>PATHS</span>
        </div>
        <div class="ml-[22px] w-[44px] h-[53px] flex flex-col items-center justify-between">
          <svg class="mt-[3px] w-[36px] h-[32px]" viewBox="0 0 36 32" fill="none" stroke="#111827" stroke-width="2"><path d="M4 5v22M32 5v22M5 4h26M5 28h26"/><rect x="1" y="1" width="5" height="5" rx="1"/><rect x="30" y="1" width="5" height="5" rx="1"/><rect x="1" y="26" width="5" height="5" rx="1"/><rect x="30" y="26" width="5" height="5" rx="1"/><rect x="8" y="8" width="13" height="11"/><path d="M21 13h7v11H15v-5"/></svg>
          <span>BREAK</span>
        </div>
      </div>

      <!-- Canvas area -->
      <main class="flex-1 bg-[#4b5563] pl-[279px] pt-[61px]">
        <div class="w-[1200px] h-[900px] bg-white p-[15px] flex gap-[14.5px]">
          <div class="w-[578px] flex flex-col gap-[15px]">
            <div class="h-[259px] border-[6px] border-[#ab47bc]"></div>
            <div class="h-[596px] border-[6px] border-[#ab47bc]"></div>
          </div>
          <div class="w-[578px] flex flex-col gap-[15px]">
            <div class="h-[596px] border-[6px] border-[#9c27b0]"></div>
            <div class="h-[259px] border-[6px] border-[#9c27b0]"></div>
          </div>
        </div>
      </main>
    </div>
  </div>

  <!-- Bottom strip -->
  <div class="flex-1 border-t border-[#c4c4c4] bg-white"></div>

  <!-- Devtools badge -->
  <div class="absolute left-[994px] top-[1280px] w-[47px] h-[47px] rounded-full bg-white shadow-sm flex items-start justify-center pt-[12px]">
    <svg class="w-[28px] h-[20px]" viewBox="0 0 28 20" fill="none" stroke="#bdbdbd" stroke-width="2.8" stroke-linejoin="round"><path d="M15 6l-3-4.500L2 17.500h7.500"/><path d="M13 17.500h13L19.500 7z"/></svg>
  </div>
</div>
</body>
</html>
